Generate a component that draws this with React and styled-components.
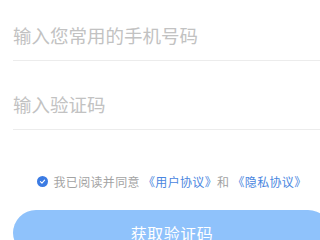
import React from 'react';
import styled, { createGlobalStyle } from 'styled-components';

const GlobalStyle = createGlobalStyle`
	html, body {
		margin: 0;
		padding: 0;
		background: #fff;
		overflow: hidden;
	}
	body {
		font-family: "Noto Sans CJK SC", "Noto Sans", sans-serif;
	}
`;

const Page = styled.div`
	width: 344px;
	padding: 0 13px;
	box-sizing: border-box;
`;

const Field = styled.div`
	display: flex;
	align-items: center;
	height: 50px;
	padding-top: ${props => props.$top}px;
	border-bottom: 1px solid #ececec;
`;

const Input = styled.input`
	flex: 1;
	border: none;
	outline: none;
	padding: 0;
	background: transparent;
	font-family: inherit;
	font-size: 18.5px;
	color: #333;

	&::placeholder {
		color: #c2c2c2;
	}
`;

const Agreement = styled.div`
	display: flex;
	align-items: center;
	justify-content: center;
	gap: 5px;
	height: 20px;
	margin-top: 41px;
	font-size: 12px;
	letter-spacing: 0.35px;
	color: #a3a3a3;
	white-space: nowrap;
`;

const Check = styled.span`
	display: inline-flex;
	align-items: center;
	justify-content: center;
	width: 11px;
	height: 11px;
	border-radius: 50%;
	background: #3b7be3;
`;

const Link = styled.span`
	color: #4a86e0;
`;

const Button = styled.button`
	display: block;
	width: 100%;
	height: 46px;
	margin-top: 19px;
	border: none;
	border-radius: 23px;
	background: #8fc2fb;
	color: #fff;
	font-family: inherit;
	font-size: 16px;
	letter-spacing: 0.5px;
`;

export default function App() {
	return (
		<>
			<GlobalStyle />
			<Page>
				<Field $top={10}>
					<Input placeholder="输入您常用的手机号码" />
				</Field>
				<Field $top={18}>
					<Input placeholder="输入验证码" />
				</Field>
				<Agreement>
					<Check>
						<svg width="7" height="7" viewBox="0 0 10 10">
							<path d="M2 5.2 L4.2 7.3 L8 3" fill="none" stroke="#fff" strokeWidth="1.6" strokeLinecap="round" strokeLinejoin="round" />
						</svg>
					</Check>
					<span>
						我已阅读并同意 <Link>《用户协议》</Link>和 <Link>《隐私协议》</Link>
					</span>
				</Agreement>
				<Button>获取验证码</Button>
			</Page>
		</>
	);
}
